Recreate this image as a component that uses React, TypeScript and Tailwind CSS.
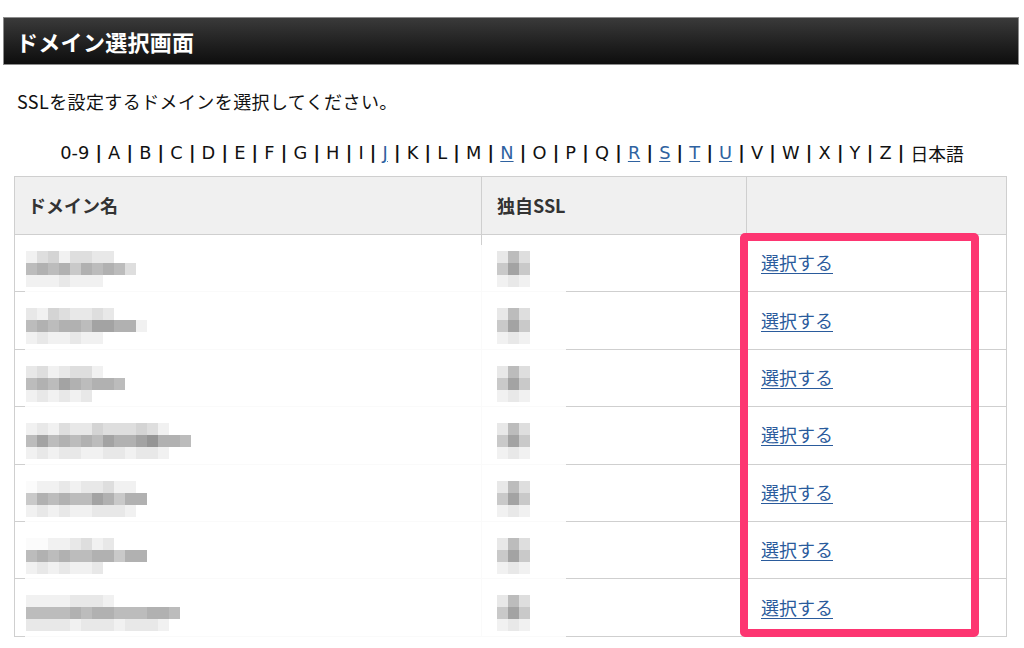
import React from 'react';

// mosaic rows for the masked domain names: each string is one strip of 11px blocks,
// digits map to grey shades (0 = near white, 9 = darkest)
const domains: string[][] = [
  ['13413322', '6767576763', '1112111'],
  ['21432232', '67677688771', '1211211'],
  ['2312331', '676876776', '121212'],
  ['1213224333431', '686767687789776', '1212211221221'],
  ['0112122311', '57676687577', '1212112221'],
  ['00112312', '67676677577', '1212112'],
  ['11112221', '66667677666776', '2222122212221'],
];

const ssl = ['263', '585', '121'];

const shades = ['#fbfbfb', '#f1f1f1', '#e8e8e8', '#dedede', '#d4d4d4', '#c9c9c9', '#bcbcbc', '#b1b1b1', '#a3a3a3', '#959595'];

const letters = ['0-9', 'A', 'B', 'C', 'D', 'E', 'F', 'G', 'H', 'I', 'J', 'K', 'L', 'M', 'N', 'O', 'P', 'Q', 'R', 'S', 'T', 'U', 'V', 'W', 'X', 'Y', 'Z', '日本語'];
const linked = new Set(['J', 'N', 'R', 'S', 'T', 'U']);

function Mosaic({ rows }: { rows: string[] }) {
  return (
    <div className="flex flex-col">
      {rows.map((r, i) => (
        <div key={i} className="flex h-[12px]">
          {r.split('').map((d, j) => (
            <div key={j} className="w-[11px] h-full" style={{ backgroundColor: shades[Number(d)] }} />
          ))}
        </div>
      ))}
    </div>
  );
}

export default function App() {
  return (
    <div className="w-[1024px] h-[648px] bg-white overflow-hidden text-[#111]" style={{ fontFamily: '"Noto Sans CJK JP", "DejaVu Sans", sans-serif' }}>
      <div className="pt-[17px] px-[3px] pr-[5px]">
        <div className="h-[48px] border border-[#8c8c8c] bg-gradient-to-b from-[#3a3a3a] to-[#0e0e0e] flex items-center pl-[12px]">
          <h1 className="text-white font-bold text-[22px] tracking-[0.3px]">ドメイン選択画面</h1>
        </div>
      </div>

      <p className="mt-[23px] pl-[17px] text-[18px] tracking-[0.4px] leading-[26px]">SSLを設定するドメインを選択してください。</p>

      <div className="mt-[27px] flex justify-center text-[17.8px] leading-[24px]" style={{ fontFamily: '"DejaVu Sans", "Noto Sans CJK JP", sans-serif' }}>
        {letters.map((l, i) => (
          <span key={l} className="whitespace-pre">
            {linked.has(l) ? <a className="text-[#2f62a0] underline underline-offset-2">{l}</a> : l === '日本語' ? <span style={{ fontFamily: '"Noto Sans CJK JP", sans-serif' }}>{l}</span> : l}
            {i < letters.length - 1 && <span className="font-bold">{' | '}</span>}
          </span>
        ))}
      </div>

      <div className="relative mt-[9px] ml-[14px] w-[993px]">
        <table className="w-full border-collapse border border-[#cfcfcf] text-[18px]">
          <thead>
            <tr className="h-[58px] bg-[#f0f0f0]">
              <th className="w-[467px] border border-[#cfcfcf] text-left pl-[13px] font-bold text-[#333]">ドメイン名</th>
              <th className="w-[265px] border border-[#cfcfcf] text-left pl-[15px] font-bold text-[#333]">独自SSL</th>
              <th className="border border-[#cfcfcf]" />
            </tr>
          </thead>
          <tbody>
            {domains.map((d, i) => (
              <tr key={i} className="h-[57.4px] border-b border-[#cfcfcf]">
                <td className="border-r border-[#cfcfcf] pl-[11px] align-top pt-[16px]">
                  <div className="relative z-10">
                    <Mosaic rows={d} />
                  </div>
                </td>
                <td className="border-r border-[#cfcfcf] pl-[15px] align-top pt-[16px]">
                  <div className="relative z-10">
                    <Mosaic rows={ssl} />
                  </div>
                </td>
                <td className="pl-[14px] pb-[1px]">
                  <a className="text-[#2a5b9c] underline underline-offset-[3px] relative z-10">選択する</a>
                </td>
              </tr>
            ))}
          </tbody>
        </table>

        {/* whitened area left behind by the masking */}
        <div className="absolute left-[11px] top-[69px] w-[541px] bottom-0 bg-white/90" />

        {/* highlight frame around the select links */}
        <div className="absolute left-[726px] top-[57px] w-[239px] bottom-0 border-[8px] border-[#fd3571] rounded-[5px] z-20" />
      </div>
    </div>
  );
}
